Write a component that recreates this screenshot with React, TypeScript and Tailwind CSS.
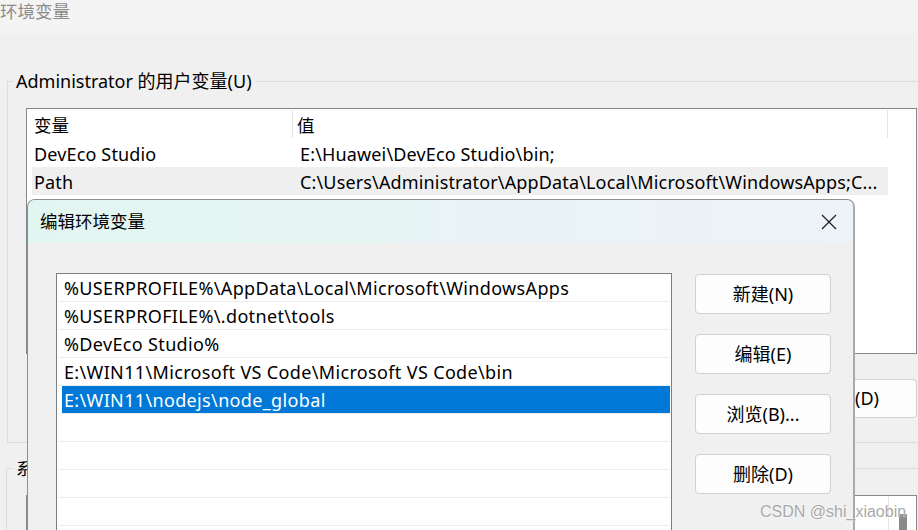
import React from "react";

const ui = "font-['Noto_Sans','Noto_Sans_CJK_SC',sans-serif]";

const userVars = [
  { name: "DevEco Studio", value: "E:\\Huawei\\DevEco Studio\\bin;", active: false },
  { name: "Path", value: "C:\\Users\\Administrator\\AppData\\Local\\Microsoft\\WindowsApps;C...", active: true },
];

const pathItems = [
  "%USERPROFILE%\\AppData\\Local\\Microsoft\\WindowsApps",
  "%USERPROFILE%\\.dotnet\\tools",
  "%DevEco Studio%",
  "E:\\WIN11\\Microsoft VS Code\\Microsoft VS Code\\bin",
  "E:\\WIN11\\nodejs\\node_global",
  "",
  "",
  "",
  "",
];

function WinButton({ children }: { children: React.ReactNode }) {
  return (
    <button className="w-[136px] h-[40px] rounded-[4px] border border-[#d1d1d1] bg-[#fdfdfd] text-[18px] text-black flex items-center justify-center">
      {children}
    </button>
  );
}

function EditDialog() {
  return (
    <div className="absolute left-[27px] top-[199px] w-[828px] h-[360px] rounded-t-[8px] border border-[#8f8f8f] border-r-[#a9a9a9] border-r-2 bg-[#f0f0f0] overflow-hidden">
      <div className="h-[43px] bg-linear-to-r from-[#e2f6f1] to-[#eef2f9] flex items-center justify-between pl-[12px] pr-[16px]">
        <span className="text-[17.5px] text-black">编辑环境变量</span>
        <svg width="16" height="16" viewBox="0 0 16 16" fill="none" stroke="#1a1a1a" strokeWidth="1.2">
          <path d="M1 1L15 15M15 1L1 15" />
        </svg>
      </div>
      <div className="flex pl-[28px] pt-[30px] gap-[23px]">
        <div className="w-[616px] h-[300px] border border-[#7e7e7e] bg-white px-[1px]">
          {pathItems.map((item, i) => (
            <div key={i} className="h-[28px] border-b border-[#ececec] flex">
              {i === 4 ? (
                <div className="ml-[4px] flex-1 bg-[#0078d7] text-white pl-[2px] text-[18px] leading-[29px] whitespace-nowrap tracking-[0.35px]">
                  {item}
                </div>
              ) : (
                <div className="pl-[6px] text-[18px] leading-[29px] whitespace-nowrap tracking-[0.35px]">{item}</div>
              )}
            </div>
          ))}
        </div>
        <div className="flex flex-col gap-[20px] pt-[1px]">
          <WinButton>新建(N)</WinButton>
          <WinButton>编辑(E)</WinButton>
          <WinButton>浏览(B)...</WinButton>
          <WinButton>删除(D)</WinButton>
        </div>
      </div>
    </div>
  );
}

export default function App() {
  return (
    <div className={`w-[918px] h-[530px] relative overflow-hidden bg-[#f0f0f0] text-black ${ui}`}>
      <div className="h-[33px] bg-[#f4f4f4] text-[17.5px] leading-[22px] text-[#8c8c8c]">环境变量</div>

      <fieldset className="ml-[7px] mt-[36px] w-[940px] h-[374px] border border-[#dcdcdc]">
        <legend className="ml-[5px] px-[3px] text-[18px] leading-[24px]">Administrator 的用户变量(U)</legend>
        <div className="ml-[18px] mt-[15px] w-[891px]">
          <div className="h-[246px] border border-[#828790] bg-white">
            <div className="h-[30px] flex">
              <div className="w-[266px] pl-[7px] text-[17.5px] leading-[30px] border-r border-[#e5e5e5] my-[1px]">变量</div>
              <div className="w-[595px] pl-[4px] text-[17.5px] leading-[30px] border-r border-[#e5e5e5] my-[1px]">值</div>
            </div>
            {userVars.map(v => (
              <div
                key={v.name}
                className={`ml-[5px] w-[856px] h-[28px] flex text-[18px] leading-[30px] whitespace-nowrap tracking-[0.15px] ${v.active ? "bg-[#efefef]" : ""}`}
              >
                <div className="w-[268px] pl-[2px]">{v.name}</div>
                <div>{v.value}</div>
              </div>
            ))}
          </div>
          <div className="mt-[25px] flex justify-end gap-[12px]">
            <button className="w-[136px] h-[39px] rounded-[4px] border border-[#d1d1d1] bg-[#fdfdfd] text-[18px]">新建(W)...</button>
            <button className="w-[136px] h-[39px] rounded-[4px] border border-[#d1d1d1] bg-[#fdfdfd] text-[18px]">编辑(E)...</button>
            <button className="w-[136px] h-[39px] rounded-[4px] border border-[#d1d1d1] bg-[#fdfdfd] text-[18px]">删除(D)</button>
          </div>
        </div>
      </fieldset>

      <fieldset className="ml-[6px] mt-[13px] w-[940px] h-[200px] border border-[#dcdcdc]">
        <legend className="ml-[6px] px-[3px] text-[17.5px] leading-[24px]">系统变量(S)</legend>
        <div className="ml-[19px] mt-[15px] w-[891px] h-[120px] border border-[#828790] bg-white flex justify-end">
          <div className="w-[28px] border-l border-[#e5e5e5] flex justify-center pt-[18px]">
            <div className="w-[8px] h-[16px] bg-[#8a8a8a]" />
          </div>
        </div>
      </fieldset>

      <EditDialog />

      <div className="absolute left-[760px] top-[502px] text-[16px] leading-[20px] text-[#a9a9a9] font-['Liberation_Sans',sans-serif] [text-shadow:0_0_2px_#fff]">
        CSDN @shi_xiaobin
      </div>
    </div>
  );
}
